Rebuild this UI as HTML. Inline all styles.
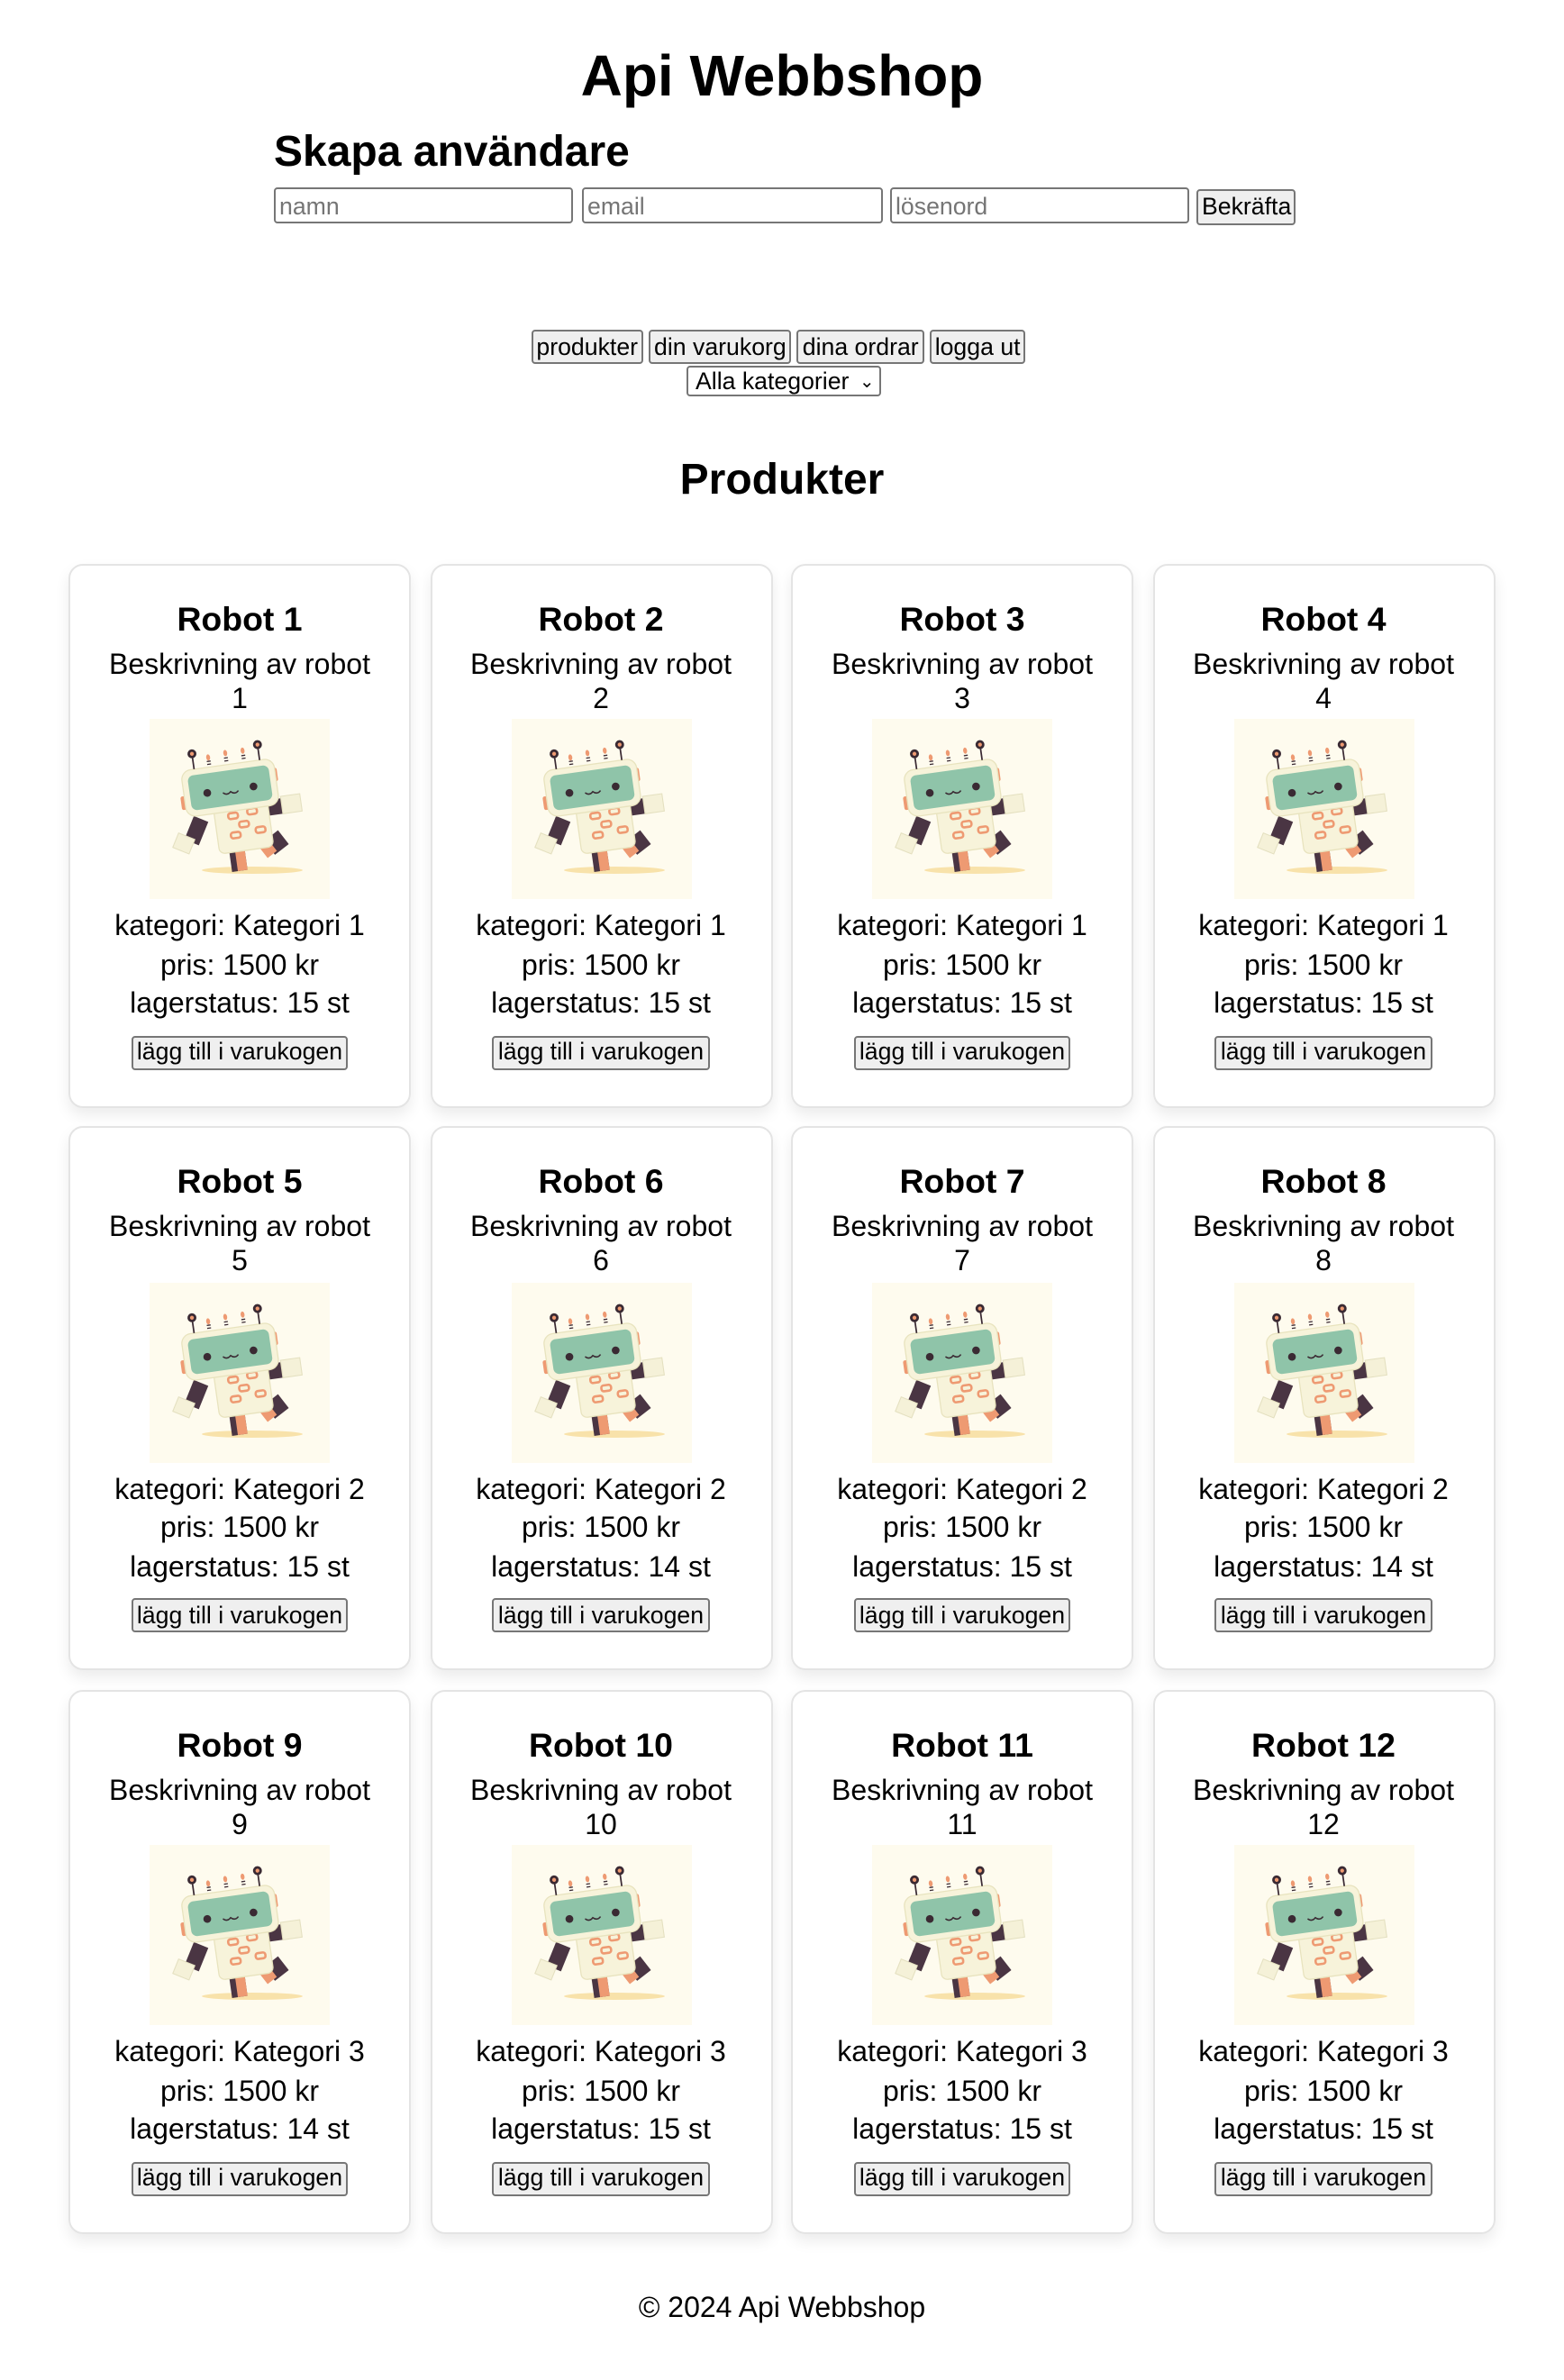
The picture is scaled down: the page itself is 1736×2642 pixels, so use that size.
<!DOCTYPE html>
<html><head><meta charset="utf-8">
<style>
html,body{margin:0;padding:0;background:#fff;}
body{width:1736px;height:2642px;overflow:hidden;}
#w{position:relative;width:868px;height:1321px;transform:scale(2);transform-origin:0 0;font-family:"Liberation Sans",Arial,sans-serif;color:#000;}
.a{position:absolute;}
h1{position:absolute;left:0;width:868px;top:22px;margin:0;text-align:center;font-size:32px;line-height:40px;font-weight:bold;}
h2{margin:0;font-size:24px;font-weight:bold;line-height:28px;}
input{position:absolute;top:104px;height:20px;box-sizing:border-box;border:1px solid #767676;border-radius:2px;font:13.33px "Liberation Sans",Arial,sans-serif;padding:1px 2px;color:#000;}
input::placeholder{color:#757575;}
button{font:13.33px "Liberation Sans",Arial,sans-serif;background:#efefef;border:1px solid #767676;border-radius:2px;padding:1px 2px;height:18px;box-sizing:border-box;color:#000;line-height:14px;}
.nav{position:absolute;left:-2px;width:868px;top:183px;text-align:center;font-size:0;}
.nav button{margin:0 1.5px;height:19px;}
.sel{position:absolute;left:381px;top:202.5px;width:108px;height:17px;box-sizing:border-box;border:1px solid #767676;border-radius:2px;font-size:13.33px;line-height:15px;padding-left:4px;}
.grid{position:absolute;left:38px;top:312.5px;width:792px;display:grid;grid-template-columns:repeat(4,190px);column-gap:10.5px;row-gap:10.5px;}
.card{height:302px;box-sizing:border-box;border:1px solid #e4e4e4;border-radius:8px;box-shadow:0 4px 8px rgba(0,0,0,0.08);text-align:center;padding-top:19px;}
.card h3{margin:0;font-size:18.7px;line-height:22px;font-weight:bold;}
.card .d{margin:5px 20px 0;font-size:16px;line-height:19px;}
.card svg{display:block;margin:1.5px auto 0;width:100px;height:100px;}
.card .i{font-size:16px;line-height:21.5px;margin-top:5px;}
.card button{margin-top:6px;padding:1px 2px;height:19px;}
.foot{position:absolute;left:0;width:868px;top:1272px;text-align:center;font-size:16px;line-height:19px;}
</style></head><body>
<svg width="0" height="0" style="position:absolute">
<defs>
<g id="r">
<rect width="100" height="100" fill="#fefbee"/>
<ellipse cx="57" cy="84" rx="28" ry="2" fill="#f8e2aa"/>
<g transform="translate(50 55) scale(1.08) translate(-50 -55) rotate(-8 50 60)">
<rect x="24" y="52" width="8" height="13" fill="#4a3543" transform="rotate(30 28 58)"/>
<rect x="20" y="63" width="9" height="8" fill="#f5f1d8" stroke="#e4e0c0" stroke-width="0.5" transform="rotate(30 28 58)"/>
<rect x="64" y="48" width="10" height="8" fill="#4a3543"/>
<rect x="73" y="47" width="10" height="9" fill="#f5f1d8" stroke="#e4e0c0" stroke-width="0.5"/>
<rect x="43" y="70" width="8" height="12" fill="#4a3543"/>
<rect x="46" y="72" width="5" height="10" fill="#ee9a72"/>
<rect x="63" y="66" width="9" height="9" fill="#4a3543" transform="rotate(-30 67 70)"/>
<rect x="59" y="66" width="6" height="8" fill="#ee9a72" transform="rotate(-30 67 70)"/>
<rect x="38" y="48" width="28" height="24" rx="3" fill="#f7f3da" stroke="#e8e3be" stroke-width="0.6"/>
<rect x="45" y="52" width="5" height="3" rx="1.2" fill="none" stroke="#ee9a72" stroke-width="1.2"/>
<rect x="55" y="51" width="5" height="3" rx="1.2" fill="none" stroke="#ee9a72" stroke-width="1.2"/>
<rect x="50" y="57" width="5" height="3" rx="1.2" fill="none" stroke="#ee9a72" stroke-width="1.2"/>
<rect x="45" y="62" width="5" height="3" rx="1.2" fill="none" stroke="#ee9a72" stroke-width="1.2"/>
<rect x="58" y="61" width="5" height="3" rx="1.2" fill="none" stroke="#ee9a72" stroke-width="1.2"/>
<rect x="22" y="40" width="3" height="7" rx="1" fill="#ee9a72"/>
<rect x="70" y="32" width="3" height="7" rx="1" fill="#ee9a72"/>
<rect x="24" y="27" width="48" height="24" rx="5" fill="#f7f3da" stroke="#e8e3be" stroke-width="0.6"/>
<rect x="27" y="30" width="42" height="18" rx="3" fill="#8fc4a9"/>
<circle cx="36" cy="40" r="2" fill="#3a2a33"/>
<circle cx="60" cy="40" r="2" fill="#3a2a33"/>
<path d="M44 41 q2 2 4 0 q2 2 4 0" fill="none" stroke="#3a2a33" stroke-width="0.7"/>
<path d="M31 27 v-7 M65 27 v-7" stroke="#3a2a33" stroke-width="0.8"/>
<circle cx="31" cy="19" r="2.3" fill="#3a2a33"/><circle cx="31" cy="19" r="1" fill="#ee9a72"/>
<circle cx="65" cy="19" r="2.3" fill="#3a2a33"/><circle cx="65" cy="19" r="1" fill="#ee9a72"/>
<ellipse cx="39" cy="22" rx="1" ry="1.6" fill="#ee9a72"/><ellipse cx="48" cy="21" rx="1" ry="1.6" fill="#ee9a72"/><ellipse cx="57" cy="21" rx="1" ry="1.6" fill="#ee9a72"/>
<path d="M38 24 h2 M38 25.5 h2 M47 23.5 h2 M47 25 h2 M56 23.5 h2 M56 25 h2" stroke="#3a2a33" stroke-width="0.6"/>
</g>
</g>
</defs></svg>
<div id="w">
<h1>Api Webbshop</h1>
<h2 class="a" style="left:152px;top:71px;">Skapa användare</h2>
<input style="left:152px;width:166px;" placeholder="namn">
<input style="left:323px;width:167px;" placeholder="email">
<input style="left:494px;width:166px;" placeholder="lösenord">
<button class="a" style="left:664px;top:104.5px;height:20px;width:55px;">Bekräfta</button>
<div class="nav"><button>produkter</button><button>din varukorg</button><button>dina ordrar</button><button>logga ut</button></div>
<div class="sel">Alla kategorier <span style="font-size:10px;position:relative;top:-1px;left:2px;">&#8964;</span></div>
<h2 class="a" style="left:0;width:868px;text-align:center;top:253px;">Produkter</h2>
<div class="grid">
<div class="card"><h3>Robot 1</h3><div class="d">Beskrivning av robot 1</div><svg viewBox="0 0 100 100"><use href="#r"/></svg><div class="i">kategori: Kategori 1<br>pris: 1500 kr<br>lagerstatus: 15 st</div><button>lägg till i varukogen</button></div>
<div class="card"><h3>Robot 2</h3><div class="d">Beskrivning av robot 2</div><svg viewBox="0 0 100 100"><use href="#r"/></svg><div class="i">kategori: Kategori 1<br>pris: 1500 kr<br>lagerstatus: 15 st</div><button>lägg till i varukogen</button></div>
<div class="card"><h3>Robot 3</h3><div class="d">Beskrivning av robot 3</div><svg viewBox="0 0 100 100"><use href="#r"/></svg><div class="i">kategori: Kategori 1<br>pris: 1500 kr<br>lagerstatus: 15 st</div><button>lägg till i varukogen</button></div>
<div class="card"><h3>Robot 4</h3><div class="d">Beskrivning av robot 4</div><svg viewBox="0 0 100 100"><use href="#r"/></svg><div class="i">kategori: Kategori 1<br>pris: 1500 kr<br>lagerstatus: 15 st</div><button>lägg till i varukogen</button></div>
<div class="card"><h3>Robot 5</h3><div class="d">Beskrivning av robot 5</div><svg viewBox="0 0 100 100"><use href="#r"/></svg><div class="i">kategori: Kategori 2<br>pris: 1500 kr<br>lagerstatus: 15 st</div><button>lägg till i varukogen</button></div>
<div class="card"><h3>Robot 6</h3><div class="d">Beskrivning av robot 6</div><svg viewBox="0 0 100 100"><use href="#r"/></svg><div class="i">kategori: Kategori 2<br>pris: 1500 kr<br>lagerstatus: 14 st</div><button>lägg till i varukogen</button></div>
<div class="card"><h3>Robot 7</h3><div class="d">Beskrivning av robot 7</div><svg viewBox="0 0 100 100"><use href="#r"/></svg><div class="i">kategori: Kategori 2<br>pris: 1500 kr<br>lagerstatus: 15 st</div><button>lägg till i varukogen</button></div>
<div class="card"><h3>Robot 8</h3><div class="d">Beskrivning av robot 8</div><svg viewBox="0 0 100 100"><use href="#r"/></svg><div class="i">kategori: Kategori 2<br>pris: 1500 kr<br>lagerstatus: 14 st</div><button>lägg till i varukogen</button></div>
<div class="card"><h3>Robot 9</h3><div class="d">Beskrivning av robot 9</div><svg viewBox="0 0 100 100"><use href="#r"/></svg><div class="i">kategori: Kategori 3<br>pris: 1500 kr<br>lagerstatus: 14 st</div><button>lägg till i varukogen</button></div>
<div class="card"><h3>Robot 10</h3><div class="d">Beskrivning av robot 10</div><svg viewBox="0 0 100 100"><use href="#r"/></svg><div class="i">kategori: Kategori 3<br>pris: 1500 kr<br>lagerstatus: 15 st</div><button>lägg till i varukogen</button></div>
<div class="card"><h3>Robot 11</h3><div class="d">Beskrivning av robot 11</div><svg viewBox="0 0 100 100"><use href="#r"/></svg><div class="i">kategori: Kategori 3<br>pris: 1500 kr<br>lagerstatus: 15 st</div><button>lägg till i varukogen</button></div>
<div class="card"><h3>Robot 12</h3><div class="d">Beskrivning av robot 12</div><svg viewBox="0 0 100 100"><use href="#r"/></svg><div class="i">kategori: Kategori 3<br>pris: 1500 kr<br>lagerstatus: 15 st</div><button>lägg till i varukogen</button></div>
</div>
<div class="foot">© 2024 Api Webbshop</div>
</div>
</body></html>
